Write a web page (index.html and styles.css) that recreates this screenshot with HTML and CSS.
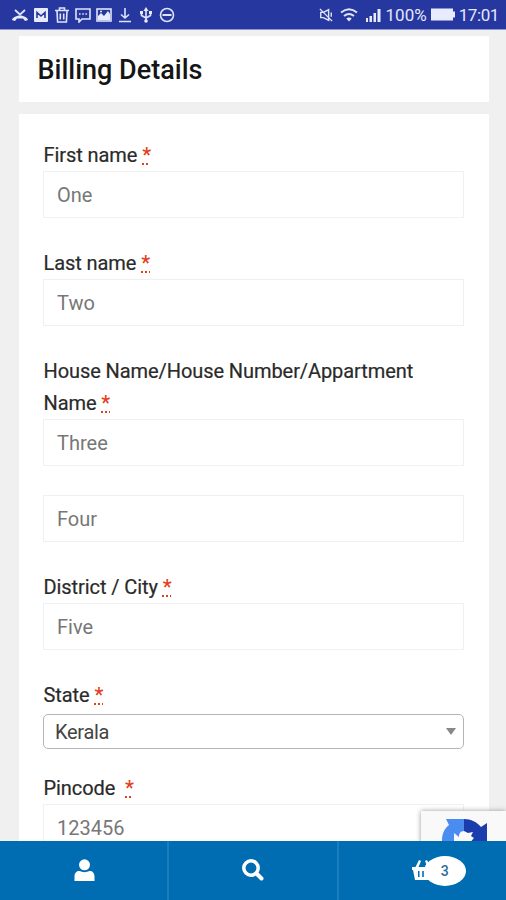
FILE: index.html
```
<!DOCTYPE html>
<html lang="en">
<head>
	<meta charset="UTF-8">
	<title>Billing Details</title>
	<link rel="stylesheet" href="styles.css">
</head>
<body>
	<div class="status">
		<div class="status-left">
			<svg width="16" height="16" viewBox="0 0 16 16"><path d="M3 3l5 4.500L13 3" stroke-width="1.8"/><path class="fill" d="M0 13c0-2 4-4.500 8-4.500s8 2.500 8 4.500l-3 1-2-2.500h-6l-2 2.500z"/></svg>
			<svg width="16" height="16" viewBox="0 0 16 16"><rect class="fill" x="1" y="1" width="14" height="14" rx="1"/><path class="dark" d="M4 11V5.500L8 9l4-3.500V11"/></svg>
			<svg width="16" height="16" viewBox="0 0 16 16"><path d="M1 3.500h14M5.500 3V1h5v2M3 4l.6 11h8.800L13 4M6.300 6.500v6M9.700 6.500v6"/></svg>
			<svg width="16" height="16" viewBox="0 0 16 16"><path d="M1 2h14v10H7l-3 3v-3H1z"/><path d="M4 7h1.600M7.200 7h1.600M10.400 7H12"/></svg>
			<svg width="16" height="16" viewBox="0 0 16 16"><rect x="1" y="2" width="14" height="12"/><path class="fill" d="M2 13V9l3-3 3 3 4-5 2 3v6z"/><path d="M4 4.500h2"/></svg>
			<svg width="16" height="16" viewBox="0 0 16 16"><path d="M8 1v10M4 7.500L8 11l4-3.500M2 14.500h12"/></svg>
			<svg width="16" height="16" viewBox="0 0 16 16"><path d="M8 3v11M3.500 5v3.500L8 11l4.500-2.500V5"/><path class="fill" d="M5.500 4L8 0l2.500 4zM2 4h3v3H2zM11 4h3v3h-3z"/><circle class="fill" cx="8" cy="14" r="1.800"/></svg>
			<svg width="16" height="16" viewBox="0 0 16 16"><circle cx="8" cy="8" r="6.500"/><path d="M3.500 8h9" stroke-width="2"/></svg>
		</div>
		<div class="status-right">
			<svg width="14" height="16" viewBox="0 0 16 16"><path d="M2 5v6h3l6 3V2L5 5zM1 1l14 14M14 5v5" stroke-width="1.600"/></svg>
			<svg class="wifi" width="18" height="16" viewBox="0 0 18 16"><path d="M1 5.500q8-6.500 16 0M4 9q5-4 10 0" stroke-width="2"/><path class="fill" d="M6.300 11.500q2.700-2 5.400 0L9 14.500z"/></svg>
			<svg class="signal" width="17" height="16" viewBox="0 0 17 16"><path class="fill" d="M1 11h2v4H1zM4.500 9h2.500v6H4.500zM8.500 6H11v9H8.500zM12.500 2h3v13h-3z"/></svg>
			<span class="percent">100%</span>
			<svg class="battery" width="24" height="13" viewBox="0 0 24 13"><path class="fill" d="M0 .5h22v3h2v6h-2v3H0z"/></svg>
			<span class="clock">17:01</span>
		</div>
	</div>

	<div class="page">
		<div class="card heading">
			<h1>Billing Details</h1>
		</div>
		<form class="card billing" action="">
			<div class="row">
				<label for="first">First name <abbr>*</abbr></label>
				<input type="text" id="first" placeholder="One">
			</div>
			<div class="row">
				<label for="last">Last name <abbr>*</abbr></label>
				<input type="text" id="last" placeholder="Two">
			</div>
			<div class="row">
				<label for="house">House Name/House Number/Appartment<br>Name <abbr>*</abbr></label>
				<input type="text" id="house" placeholder="Three">
			</div>
			<div class="row">
				<input type="text" id="house2" placeholder="Four">
			</div>
			<div class="row">
				<label for="city">District / City <abbr>*</abbr></label>
				<input type="text" id="city" placeholder="Five">
			</div>
			<div class="row state">
				<label>State <abbr>*</abbr></label>
				<div class="select"><span>Kerala</span></div>
			</div>
			<div class="row">
				<label for="pin">Pincode &nbsp;<abbr>*</abbr></label>
				<input type="text" id="pin" placeholder="123456">
			</div>
		</form>
		<div class="captcha">
			<svg width="46" height="46" viewBox="0 0 46 46">
				<path fill="#4a8cf0" d="M4 1h18v12c-4 0-5 3-5 6l-5-4 0 8H0C0 16 2 11 7 7z"/>
				<path fill="#1b3cad" d="M22 1c7 0 13 3 17 8l6-4v22H26l6-7-3-2 2-4-5 1-4-2z"/>
			</svg>
		</div>
	</div>

	<div class="nav">
		<a class="tab">
			<svg width="21" height="22" viewBox="0 0 20 22"><circle cx="10" cy="5.800" r="5.500"/><path d="M0 22v-4.500C0 14 2 12 5 12c3 1.500 7 1.500 10 0 3 0 5 2 5 5.500V22z"/></svg>
		</a>
		<a class="tab">
			<svg width="22" height="22" viewBox="0 0 22 22"><circle class="line" cx="9" cy="9" r="7.200"/><path class="line handle" d="M14.500 14.500l5 5"/></svg>
		</a>
		<a class="tab cart">
			<svg width="22" height="20" viewBox="0 0 22 20"><path fill-rule="evenodd" d="M0 7h3.500L7 0l2 1-2.500 6h9L13 1l2-1 3.500 7H22v3h-1l-2 10H3L1 10H0zM6 11v6h1.500v-6zM10.200 11v6h1.600v-6zM14.500 11v6H16v-6z"/></svg>
			<span class="count">3</span>
		</a>
	</div>
</body>
</html>
```

FILE: styles.css
```
* {
	box-sizing: border-box;
	margin: 0;
	padding: 0;
	}
body {
	display: flex;
	flex-direction: column;
	height: 900px;
	overflow: hidden;
	font-family: Roboto, "Liberation Sans", sans-serif;
	color: #333;
	background: #f0f0f0;
	}

/* status bar */
.status {
	display: flex;
	justify-content: space-between;
	flex: none;
	height: 30px;
	padding: 0 7px 0 12px;
	color: #e4e7fa;
	background: #2638a0;
	border-bottom: 1px solid #8f97cf;
	}
	.status svg {
		fill: none;
		stroke: #dfe3f8;
		stroke-width: 1.6;
		}
	.status .fill {
		fill: #e8ebfb;
		stroke: none;
		}
	.status .dark {
		stroke: #2638a0;
		stroke-width: 1.6;
		}
.status-left, .status-right {
	display: flex;
	align-items: center;
	}
.status-left {
	gap: 5px;
	}
.status-right {
	font-size: 17px;
	}
	.wifi {
		margin-left: 7px;
		}
	.signal {
		margin-left: 7px;
		}
	.percent {
		margin-left: 4px;
		}
	.battery {
		margin: 0 4px 0 4px;
		}
	.clock {
		font-size: 17px;
		letter-spacing: -0.4px;
		}

/* form */
.page {
	position: relative;
	flex: 1;
	min-height: 0;
	padding: 6px 17px 0 19px;
	overflow: hidden;
	}
.card {
	background: #fff;
	}
.heading {
	height: 66px;
	padding: 1px 0 0 18.5px;
	margin-bottom: 12px;
	}
	h1 {
		font-size: 27px;
		font-weight: 500;
		line-height: 66px;
		color: #151515;
		}
.billing {
	display: flex;
	flex-direction: column;
	gap: 29px;
	padding: 25px 25px 60px 24px;
	}
	label {
		display: block;
		padding-left: 0.5px;
		font-size: 20px;
		letter-spacing: -0.08px;
		line-height: 32px;
		color: #2a2a2a;
		-webkit-text-stroke: 0.2px;
		}
	abbr {
		font-weight: 500;
		color: #e2401c;
		text-decoration: underline dotted #e2401c;
		-webkit-text-stroke: 0;
		}
	input {
		display: block;
		width: 100%;
		height: 47px;
		padding: 0 13px;
		font: 20px Roboto, "Liberation Sans", sans-serif;
		color: #777;
		background: #fff;
		border: 1px solid #f0f0f0;
		}
		input::placeholder {
			color: #777;
			}
.state {
	margin-bottom: -6px;
	}
.select {
	display: flex;
	align-items: center;
	justify-content: space-between;
	height: 35px;
	margin-top: 3px;
	padding: 0 7px 0 11px;
	font-size: 20px;
	letter-spacing: -0.3px;
	color: #444;
	border: 1px solid #b5b5b5;
	border-radius: 5px;
	}
	.select::after {
		content: "";
		border: 5px solid transparent;
		border-top: 7px solid #888;
		border-bottom: 0;
		}

/* badge in the corner, cut by the bottom bar */
.captcha {
	position: absolute;
	right: 0;
	bottom: -45px;
	width: 85px;
	height: 75px;
	padding: 7px 0 0 21px;
	background: #f9f9f9;
	box-shadow: 0 0 5px #999;
	}

.nav {
	display: flex;
	flex: none;
	height: 59px;
	background: #006db3;
	}
	.tab {
		display: flex;
		flex: 1;
		align-items: center;
		justify-content: center;
		padding: 0 0 1px 1px;
		}
	.tab + .tab {
		border-left: 2px solid #1a7dbd;
		}
	.tab svg {
		fill: #fff;
		}
	.tab .line {
		fill: none;
		stroke: #fff;
		stroke-width: 3.5;
		}
	.tab .handle {
		stroke-width: 4;
		stroke-linecap: round;
		}
.cart {
	position: relative;
	}
.count {
	position: absolute;
	left: 85px;
	top: 15px;
	width: 42px;
	height: 30px;
	font-size: 14px;
	font-weight: 500;
	line-height: 30px;
	text-align: center;
	color: #2a6a9c;
	background: #fff;
	border-radius: 50%;
	}
```
